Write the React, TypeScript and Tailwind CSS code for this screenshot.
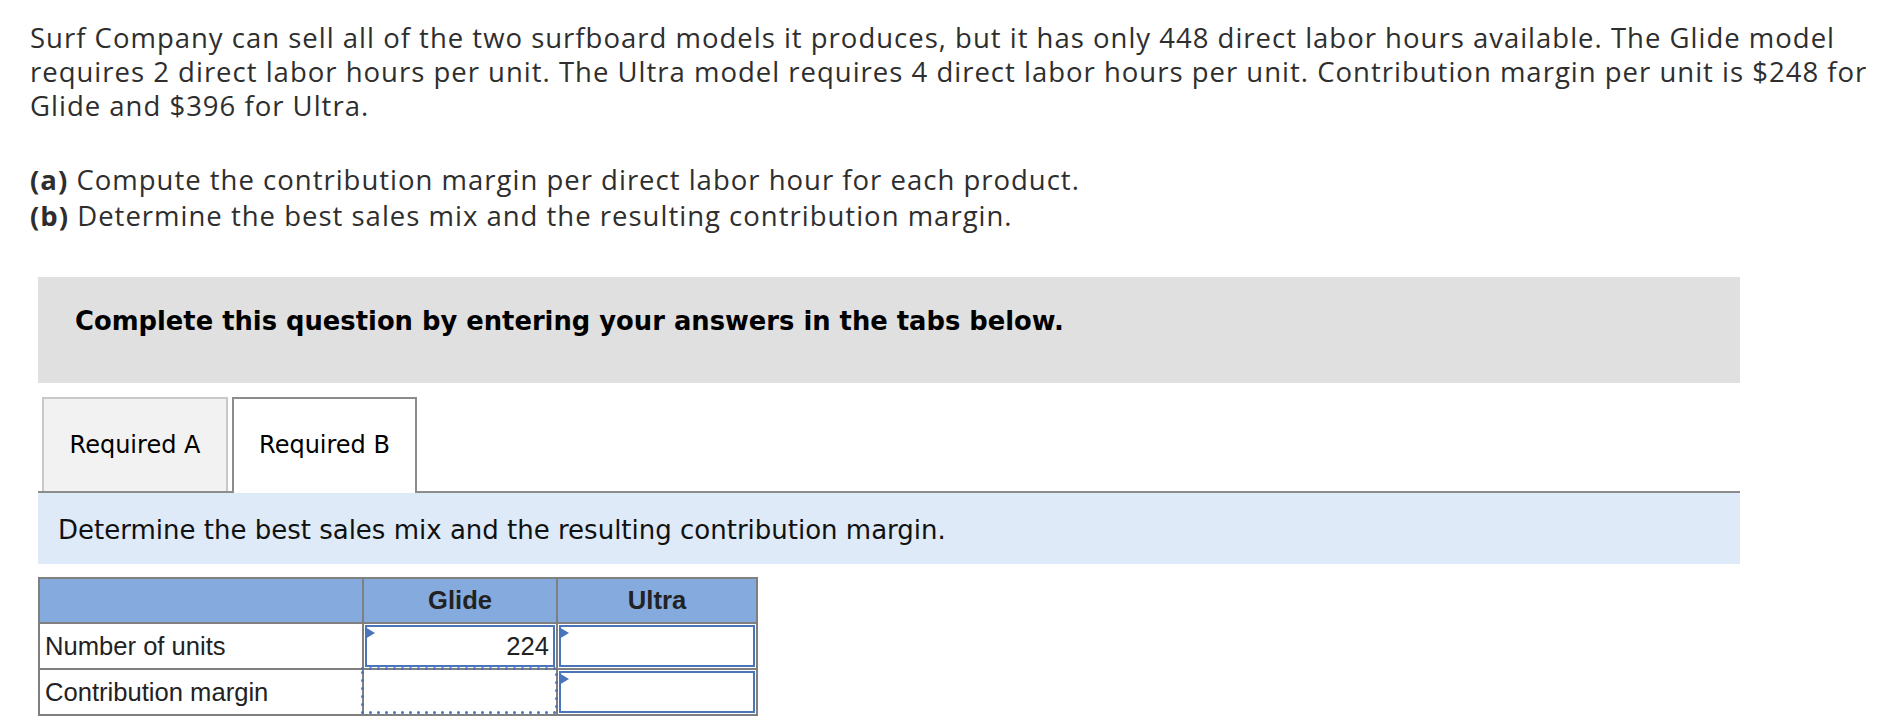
import React from "react";

function Marker() {
  return (
    <svg className="absolute -left-[2px] top-0" width="10" height="12" viewBox="0 0 10 12">
      <polygon points="0,0 10,6 0,12" fill="#4a75b8" />
    </svg>
  );
}

export default function App() {
  return (
    <div className="min-h-screen bg-white">
      <div className="pl-[30px] pr-[12px] pt-[21px] text-[27.5px] leading-[34px] tracking-[1px] text-[#2e2e2e] [font-family:'Open_Sans','Noto_Sans',sans-serif]">
        <p>
          Surf Company can sell all of the two surfboard models it produces, but it has only 448 direct labor hours
          available. The Glide model requires 2 direct labor hours per unit. The Ultra model requires 4 direct labor hours
          per unit. Contribution margin per unit is $248 for Glide and $396 for Ultra.
        </p>
        <div className="mt-[39px] leading-[36px]">
          <p>
            <b className="font-bold">(a)</b> Compute the contribution margin per direct labor hour for each product.
          </p>
          <p>
            <b className="font-bold">(b)</b> Determine the best sales mix and the resulting contribution margin.
          </p>
        </div>
      </div>

      <div className="ml-[38px] mt-[43px] w-[1702px]">
        <div className="h-[106px] bg-[#e0e0e0] pl-[37px] pt-[29px] text-[25.8px] leading-[30px] font-bold text-black [font-family:Verdana,'DejaVu_Sans',sans-serif]">
          Complete this question by entering your answers in the tabs below.
        </div>

        <div className="mt-[14px] flex items-start gap-[4px] border-b-2 border-[#8c8c8c] pl-[4px] text-[24px] text-black [font-family:Verdana,'DejaVu_Sans',sans-serif]">
          <div className="flex h-[94px] w-[186px] items-center justify-center border-2 border-b-0 border-[#c8c8c8] bg-[#f2f2f2]">
            Required A
          </div>
          <div className="relative z-10 -mb-[2px] flex h-[96px] w-[185px] items-center justify-center border-2 border-b-0 border-[#8c8c8c] bg-white pb-[2px]">
            Required B
          </div>
        </div>

        <div className="h-[71px] bg-[#deeaf7] pl-[20px] pt-[22px] text-[26px] leading-[30px] text-[#111111] [font-family:Verdana,'DejaVu_Sans',sans-serif]">
          Determine the best sales mix and the resulting contribution margin.
        </div>

        <div className="mt-[13px] grid w-[720px] grid-cols-[322px_192px_198px] grid-rows-[43px_44px_44px] gap-[2px] border-2 border-[#7f7f7f] bg-[#7f7f7f] text-[25.6px] text-[#222222] [font-family:'Liberation_Sans',Arial,sans-serif]">
          <div className="bg-[#84aade]" />
          <div className="flex items-center justify-center bg-[#84aade] font-bold">Glide</div>
          <div className="flex items-center justify-center bg-[#84aade] font-bold">Ultra</div>

          <div className="flex items-center bg-white pl-[5px]">Number of units</div>
          <div className="bg-white p-[1px]">
            <div className="relative flex h-full items-center justify-end border-2 border-[#4a75b8] pr-[4px]">
              <Marker />
              224
            </div>
          </div>
          <div className="bg-white p-[1px]">
            <div className="relative h-full border-2 border-[#4a75b8]">
              <Marker />
            </div>
          </div>

          <div className="flex items-center bg-white pl-[5px]">Contribution margin</div>
          <div className="relative bg-white">
            <svg className="pointer-events-none absolute -left-[3px] -top-[3px] overflow-visible" width="197" height="47">
              <rect
                x="1.5"
                y="1.5"
                width="194"
                height="44"
                fill="none"
                stroke="#4a75b8"
                strokeWidth="3"
                strokeDasharray="0 8"
                strokeLinecap="round"
              />
            </svg>
          </div>
          <div className="bg-white p-[1px]">
            <div className="relative h-full border-2 border-[#4a75b8]">
              <Marker />
            </div>
          </div>
        </div>
      </div>
    </div>
  );
}
